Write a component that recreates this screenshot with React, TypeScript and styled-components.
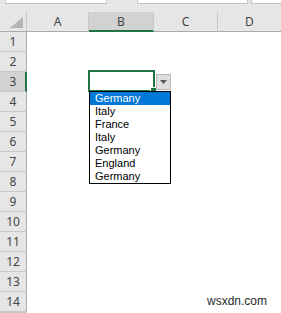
import React from 'react';
import styled, { createGlobalStyle } from 'styled-components';

const Global = createGlobalStyle`
  html, body { margin: 0; padding: 0; background: #ffffff; }
  body { font-family: "Noto Sans", "Liberation Sans", sans-serif; }
`;

const Frame = styled.div`
  position: relative;
  width: 281px;
  height: 313px;
  overflow: hidden;
  background: #e6e6e6;
`;

const TopStrip = styled.div`
  display: flex;
  height: 12px;
  padding-left: 5px;
  box-sizing: border-box;
`;

const BarBox = styled.div<{ $w: number; $gap: number }>`
  width: ${(p) => p.$w}px;
  margin-right: ${(p) => p.$gap}px;
  height: 4px;
  box-sizing: border-box;
  background: #ffffff;
  border: 1px solid #c4c4c4;
  border-top: none;
  flex: none;
`;

const Sheet = styled.div`
  display: grid;
  grid-template-columns: 27px 62px 65px 64px 1fr;
  grid-template-rows: repeat(15, 20px);
  background: #ffffff;
`;

const Corner = styled.div`
  background: #e6e6e6;
  border-right: 1px solid #c8c8c8;
  border-bottom: 1px solid #ababab;
  box-sizing: border-box;
  display: flex;
  align-items: flex-end;
  justify-content: flex-end;
  padding: 0 3px 3px 0;
`;

const ColHead = styled.div<{ $sel?: boolean; $last?: boolean }>`
  background: ${(p) => (p.$sel ? '#d2d2d2' : '#e6e6e6')};
  border-right: ${(p) => (p.$last ? 'none' : '1px solid #c8c8c8')};
  border-bottom: ${(p) => (p.$sel ? '2px solid #217346' : '1px solid #ababab')};
  box-sizing: border-box;
  display: flex;
  align-items: center;
  justify-content: center;
  font-size: 12px;
  color: #444444;
  padding-top: ${(p) => (p.$sel ? '1px' : '0')};
`;

const RowHead = styled.div<{ $sel?: boolean }>`
  background: ${(p) => (p.$sel ? '#d2d2d2' : '#e6e6e6')};
  border-right: ${(p) => (p.$sel ? '2px solid #217346' : '1px solid #ababab')};
  border-bottom: 1px solid #c8c8c8;
  box-sizing: border-box;
  display: flex;
  align-items: center;
  justify-content: center;
  font-size: 12px;
  color: #444444;
  padding-left: ${(p) => (p.$sel ? '1px' : '0')};
`;

const Cell = styled.div`
  background: #ffffff;
`;

const ActiveCell = styled.div`
  position: absolute;
  left: 88px;
  top: 70px;
  width: 67px;
  height: 22px;
  box-sizing: border-box;
  border: 2px solid #217346;
`;

const FillHandle = styled.div`
  position: absolute;
  right: -4px;
  bottom: -4px;
  width: 5px;
  height: 5px;
  background: #217346;
  border: 1px solid #ffffff;
`;

const DropButton = styled.div`
  position: absolute;
  left: 156px;
  top: 74px;
  width: 15px;
  height: 16px;
  box-sizing: border-box;
  background: #dedede;
  border: 1px solid #b9b9b9;
  display: flex;
  align-items: center;
  justify-content: center;
`;

const ListBox = styled.div`
  position: absolute;
  left: 89px;
  top: 91px;
  width: 82px;
  height: 93px;
  box-sizing: border-box;
  background: #ffffff;
  border: 1px solid #000000;
  display: flex;
  flex-direction: column;
`;

const ListItem = styled.div<{ $sel?: boolean }>`
  height: 13px;
  line-height: 13px;
  padding-left: 5px;
  font-family: "Liberation Sans", Arial, sans-serif;
  font-size: 11px;
  color: ${(p) => (p.$sel ? '#ffffff' : '#000000')};
  background: ${(p) => (p.$sel ? '#0078d7' : 'transparent')};
  white-space: nowrap;
`;

const Watermark = styled.div`
  position: absolute;
  left: 207px;
  top: 294px;
  font-family: "Liberation Sans", "Noto Sans", sans-serif;
  font-size: 12px;
  color: #2a2a2a;
`;

const cols = ['A', 'B', 'C', 'D'];
const items = ['Germany', 'Italy', 'France', 'Italy', 'Germany', 'England', 'Germany'];

export default function App() {
  const rows = Array.from({ length: 14 }, (_, i) => i + 1);
  return (
    <>
      <Global />
      <Frame>
        <TopStrip>
          <BarBox $w={102} $gap={30} />
          <BarBox $w={111} $gap={3} />
          <BarBox $w={40} $gap={0} />
        </TopStrip>
        <Sheet>
          <Corner>
            <svg width="13" height="11" viewBox="0 0 13 11">
              <polygon points="13,0 13,11 0,11" fill="#b4b4b4" />
            </svg>
          </Corner>
          {cols.map((c, i) => (
            <ColHead key={c} $sel={c === 'B'} $last={i === cols.length - 1}>
              {c}
            </ColHead>
          ))}
          {rows.map((r) => (
            <React.Fragment key={r}>
              <RowHead $sel={r === 3}>{r}</RowHead>
              {cols.map((c) => (
                <Cell key={c} />
              ))}
            </React.Fragment>
          ))}
          <RowHead />
          {cols.map((c) => (
            <Cell key={c} />
          ))}
        </Sheet>
        <ActiveCell>
          <FillHandle />
        </ActiveCell>
        <DropButton>
          <svg width="7" height="4" viewBox="0 0 7 4">
            <polygon points="0,0 7,0 3.5,4" fill="#5a5a5a" />
          </svg>
        </DropButton>
        <ListBox>
          {items.map((t, i) => (
            <ListItem key={i} $sel={i === 0}>
              {t}
            </ListItem>
          ))}
        </ListBox>
        <Watermark>wsxdn.com</Watermark>
      </Frame>
    </>
  );
}
